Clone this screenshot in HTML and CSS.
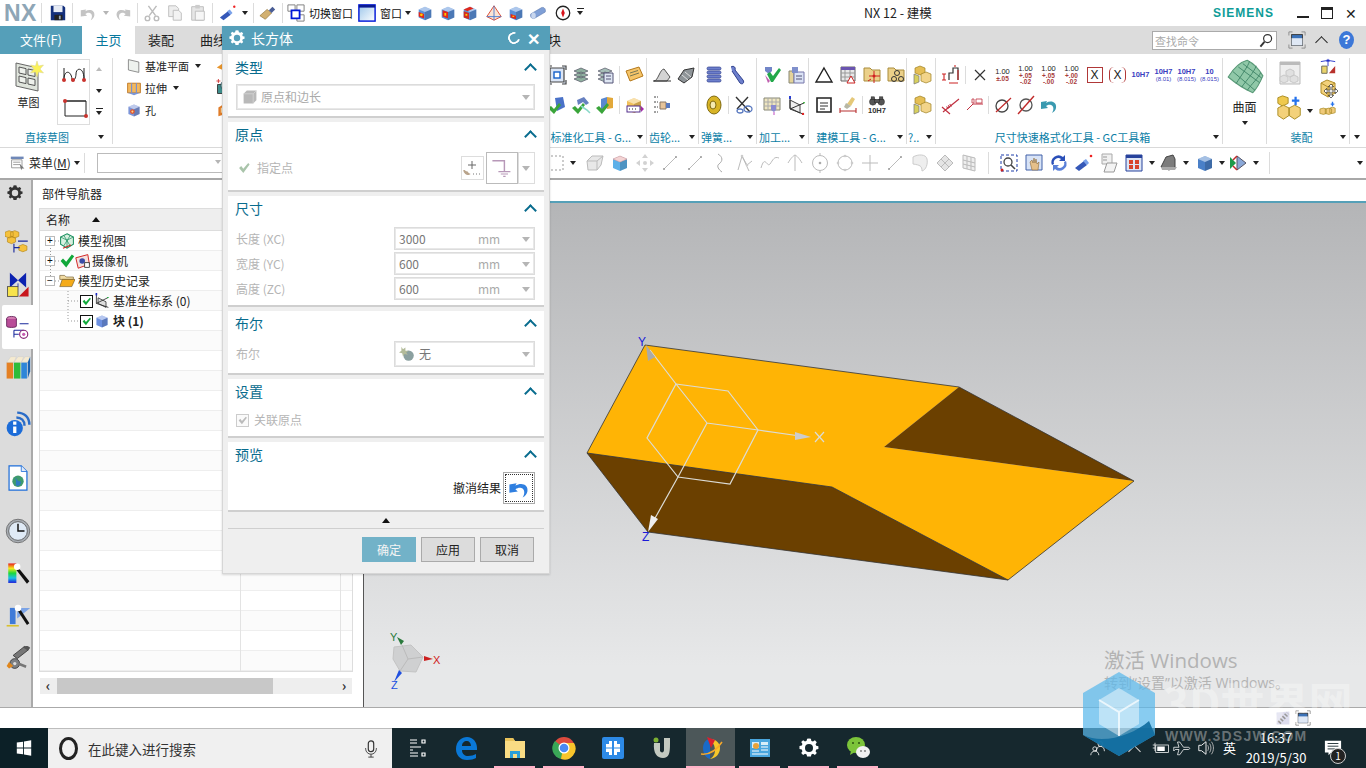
FILE: index.html
```html
<!DOCTYPE html>
<html lang="zh-CN">
<head>
<meta charset="utf-8">
<title>NX 12 - 建模</title>
<link rel="stylesheet" href="styles.css">
</head>
<body>
<svg class="defs" xmlns="http://www.w3.org/2000/svg">
<symbol id="save" viewBox="0 0 20 20"><path d="M2 2h14l2 2v14H2z" fill="#14307c"/><path d="M5 2h10v7H5z" fill="#e6ebf4"/><path d="M6 12h9v6H6z" fill="#222"/><path d="M11 13h2v4h-2z" fill="#9ab"/></symbol>
<symbol id="undo" viewBox="0 0 20 20"><path d="M2 7l6-1-1 2c5-3 11-1 10 5-.3 2-2 4-4 5 2-3 2-7-1-8-2-.5-3 0-5 1l2 2-7 1z" fill="currentColor"/></symbol>
<symbol id="redo" viewBox="0 0 20 20"><path d="M18 7l-6-1 1 2C8 5 2 7 3 13c.3 2 2 4 4 5-2-3-2-7 1-8 2-.5 3 0 5 1l-2 2 7 1z" fill="currentColor"/></symbol>
<symbol id="cut" viewBox="0 0 20 20"><g fill="none" stroke="#bcbcbc" stroke-width="1.6"><path d="M15 2L7 13M6 2l8 11"/><circle cx="5" cy="16" r="2.5"/><circle cx="15" cy="16" r="2.5"/></g></symbol>
<symbol id="copy" viewBox="0 0 20 20"><path d="M3 2h8l3 3v9H3z" fill="#eee" stroke="#bbb"/><path d="M8 7h6l3 3v8H8z" fill="#f3f3f3" stroke="#bbb"/></symbol>
<symbol id="paste" viewBox="0 0 20 20"><path d="M3 3h13v15H3z" fill="#e6e6e6" stroke="#bbb"/><path d="M7 1h5v4H7z" fill="#ccc"/><path d="M7 8h10v10H7z" fill="#f6f6f6" stroke="#bbb"/></symbol>
<symbol id="wand" viewBox="0 0 20 20"><path d="M1 15l9-7 3 4-8 6z" fill="#3558b8"/><path d="M9 8l3-2 3 4-2 2z" fill="#7aa2ea"/><path d="M17 2l1 1-1 1-1-1z" fill="#e00"/><circle cx="17" cy="3" r="1.3" fill="#e22"/></symbol>
<symbol id="brush" viewBox="0 0 20 20"><path d="M1 13l8-7 5 4-7 7z" fill="#d2b070" stroke="#8d7035" stroke-width=".7"/><path d="M11 7l4-4 3 3-4 4z" fill="#4a5d95"/></symbol>
<symbol id="switch" viewBox="0 0 20 20"><path d="M1 1h8v7H1zM11 1h8v7h-8zM11 12h8v7h-8z" fill="#fff" stroke="#777"/><path d="M5 7h9v9H5z" fill="#fff" stroke="#0018d8" stroke-width="2"/></symbol>
<symbol id="winb" viewBox="0 0 20 20"><rect x="1" y="1" width="18" height="18" fill="url(#gw)" stroke="#0018d8" stroke-width="1.6"/><path d="M1 1h18v3H1z" fill="#0a1a90"/></symbol>
<linearGradient id="gw" x1="0" y1="0" x2="1" y2="1"><stop offset="0" stop-color="#9cc6ea"/><stop offset="1" stop-color="#fff"/></linearGradient>
<symbol id="cube" viewBox="0 0 20 20"><path d="M3 6l7-3 7 3v9l-7 3-7-3z" fill="currentColor"/><path d="M3 6l7-3 7 3-7 3z" fill="#fff" opacity=".5"/><path d="M10 9l7-3v9l-7 3z" fill="#000" opacity=".16"/></symbol>
<symbol id="vc1" viewBox="0 0 20 20"><use href="#cube" color="#5a8fd8"/><path d="M3 9l6 2v5l-6-2z" fill="#e0281c"/><circle cx="6" cy="12" r="1.5" fill="#fc0"/></symbol>
<symbol id="vc2" viewBox="0 0 20 20"><use href="#cube" color="#5a8fd8"/><path d="M4 7l6 2v7l-6-2z" fill="#e0281c"/><rect x="6" y="10" width="2" height="3" fill="#fc0"/></symbol>
<symbol id="vc3" viewBox="0 0 20 20"><use href="#cube" color="#5a8fd8"/><path d="M3 6l7-3 4 2-7 3z" fill="#e0281c"/><path d="M3 8l6 2v7l-6-2z" fill="#d02c20"/><rect x="5" y="11" width="2" height="2" fill="#fc0"/></symbol>
<symbol id="vc4" viewBox="0 0 20 20"><path d="M10 2l8 12-8 4-8-4z" fill="#fbe3d3" stroke="#d8422a"/><path d="M10 2v16M2 14l16 0" stroke="#4a7ad0" fill="none"/></symbol>
<symbol id="vc5" viewBox="0 0 20 20"><use href="#cube" color="#5a8fd8"/><path d="M4 11l6 2v4l-6-2z" fill="#e0281c"/><rect x="6" y="13" width="2" height="1.4" fill="#fc0"/></symbol>
<symbol id="cyl" viewBox="0 0 20 20"><path d="M2 11l12-7c3-1 5 2 4 5L6 16c-3 1-5-2-4-5z" fill="#7f9fd6" stroke="#5672a8" stroke-width=".6"/><ellipse cx="5" cy="13" rx="2.5" ry="3.5" fill="#c8d6ee"/></symbol>
<symbol id="compass" viewBox="0 0 20 20"><circle cx="10" cy="10" r="7.5" fill="#fff" stroke="#222" stroke-width="1.4"/><path d="M10 5l2 5-2 5-2-5z" fill="#d8141c"/></symbol>
<symbol id="search" viewBox="0 0 20 20"><circle cx="12" cy="7" r="5" fill="#fff" stroke="#333" stroke-width="1.5"/><path d="M8 11l-5 6" stroke="#333" stroke-width="2.4"/></symbol>
<symbol id="frame" viewBox="0 0 20 20"><path d="M3 3h14v14H3zM1 1v4M3 1h2v0M15 1h4v4M1 15v4h4M15 19h4v-4" fill="#dbe5f5" stroke="#444" stroke-width="1.2"/><rect x="7" y="7" width="6" height="6" fill="#fff" stroke="#1560c8" stroke-width="1.4"/></symbol>
<symbol id="sk" viewBox="0 0 32 32"><path d="M3 3l22 5v23L3 26z" fill="#dfe4dc" stroke="#666"/><path d="M6 7l7 1.6v6l-7-1.6zM15 9l7 1.5v6l-7-1.5zM6 16l7 1.6v6l-7-1.6zM15 18l7 1.5v6l-7-1.5z" fill="#eef1ec" stroke="#555"/><path d="M24 1l1.5 5 5-1-3.5 4 3.500 4-5-1-1.500 5-1.500-5-5 1 3.500-4-3.500-4 5 1z" fill="#fbf25a" stroke="#d9d28a" stroke-width=".5"/></symbol>
<symbol id="scurve" viewBox="0 0 30 20"><path d="M5 2v11M25 2v11M5 13c0-9 7-9 8 0 0 5 4 0 4-5 0-7 8-7 8 5" fill="none" stroke="#222"/><circle cx="5" cy="14" r="2" fill="#c9332e"/><circle cx="14" cy="14" r="2" fill="#c9332e"/><circle cx="25" cy="14" r="2" fill="#c9332e"/></symbol>
<symbol id="srect" viewBox="0 0 30 20"><path d="M6 3v15h21V3z" fill="none" stroke="#222"/><path d="M6 3h21" stroke="#222"/><circle cx="6" cy="3" r="2" fill="#c9332e"/><circle cx="27" cy="18" r="2" fill="#c9332e"/></symbol>
<symbol id="plane" viewBox="0 0 20 20"><path d="M3 2l13 3v13L3 15z" fill="#eef2ee" stroke="#777"/></symbol>
<symbol id="extr" viewBox="0 0 20 20"><path d="M2 4h16v12H2z" fill="#f4b85c" stroke="#b86a10"/><path d="M7 4v12M13 4v12" stroke="#7790d0" stroke-width="1.4"/><path d="M2 16l8 3 8-3" fill="#7a96d8"/></symbol>
<symbol id="hole" viewBox="0 0 20 20"><use href="#cube" color="#7c94d8"/><circle cx="8" cy="12" r="3" fill="#e2552c"/><circle cx="8" cy="12" r="1.300" fill="#fbd18a"/></symbol>
<symbol id="ribo" viewBox="0 0 20 20"><path d="M1 13l9-6 9 4-9 6z" fill="#e8952c"/><path d="M7 6l3-3 3 3-3 3z" fill="#7a96d8"/></symbol>
<symbol id="unite" viewBox="0 0 20 20"><rect x="2" y="7" width="11" height="11" fill="#3e8e8c" stroke="#222"/><circle cx="12" cy="8" r="6" fill="#8fc0b8" stroke="#345"/><path d="M3 0v5M.5 2.500h5" stroke="#c22"/></symbol>
<symbol id="shell" viewBox="0 0 20 20"><path d="M3 8l10-6v14l-10 3z" fill="#e07c28"/><path d="M6 9l5-3v7l-5 2z" fill="#f4d3a0"/></symbol>
<symbol id="stack" viewBox="0 0 20 20"><g fill="#8fb09f" stroke="#556"  stroke-width=".7"><path d="M3 14l7-3 7 3-7 3zM3 10l7-3 7 3-7 3zM3 6l7-3 7 3-7 3z"/></g></symbol>
<symbol id="sdoc" viewBox="0 0 20 20"><g fill="#a7bfb8" stroke="#556" stroke-width=".7"><path d="M3 14l7-3 7 3-7 3zM3 10l7-3 7 3-7 3zM3 6l7-3 7 3-7 3z"/></g><path d="M9 8h9v10H9z" fill="#dfe7f3" stroke="#557"/><path d="M11 11h5M11 14h5" stroke="#557"/></symbol>
<symbol id="tag" viewBox="0 0 20 20"><path d="M2 6l13-4 4 9-13 5z" fill="#f5c468" stroke="#b5791b"/><path d="M6 8l8-2.500M6 11l9-3" stroke="#775" /></symbol>
<symbol id="btick" viewBox="0 0 20 20"><path d="M8 3l8-1 2 10-8 4z" fill="#4a72c8"/><path d="M1 13l3-2 3 3 5-6 2 2-7 9z" fill="#3aa53a"/></symbol>
<symbol id="htick" viewBox="0 0 20 20"><path d="M6 5l7-3 5 6-3 2-3-3-5 3z" fill="#6780c0"/><path d="M1 13l3-2 3 3 5-6 2 2-7 9z" fill="#3aa53a"/><path d="M10 11l6 4 3 3" stroke="#88d8c8" stroke-width="1.6" fill="none"/></symbol>
<symbol id="ytick" viewBox="0 0 20 20"><path d="M6 4l6-2v11l-6 2z" fill="#5a88d0"/><path d="M12 2l6 1v10l-6 1z" fill="#e2a83a"/><path d="M1 13l3-2 3 3 5-6 2 2-7 9z" fill="#3aa53a"/></symbol>
<symbol id="parts" viewBox="0 0 20 20"><use href="#cube" color="#f0c05a"/><rect x="3" y="11" width="13" height="6" fill="#fff" stroke="#532e8c"/><path d="M5 14h1M8 14h1M11 14h1" stroke="#222"/><path d="M17 11l3 3-3 3z" fill="#a02ca8"/></symbol>
<symbol id="ga" viewBox="0 0 20 20"><path d="M2 16c4 0 6-12 10-12l6 8-3 4z" fill="#d4d4d4" stroke="#555"/><path d="M1 16h18" stroke="#333"/></symbol>
<symbol id="gb" viewBox="0 0 20 20"><path d="M2 14l6-9 10-2-2 9-8 6z" fill="#8e9498" stroke="#333"/><path d="M6 10l6 5M9 7l6 5" stroke="#ddd"/></symbol>
<symbol id="gc" viewBox="0 0 20 20"><path d="M2 2h4M2 7h4M2 12h4M2 17h4" stroke="#444" stroke-dasharray="2 1" /><path d="M8 7h6v7H8z" fill="#e7c49a" stroke="#876"/><path d="M14 8h4v5h-4z" fill="#5a7ac0"/></symbol>
<symbol id="coil" viewBox="0 0 20 20"><g fill="#6d7fcc" stroke="#2e3f8d" stroke-width=".7"><rect x="3" y="2" width="14" height="3" rx="1.500"/><rect x="3" y="6" width="14" height="3" rx="1.500"/><rect x="3" y="10" width="14" height="3" rx="1.500"/><rect x="3" y="14" width="14" height="3" rx="1.500"/></g></symbol>
<symbol id="spr" viewBox="0 0 20 20"><path d="M3 2c3-2 5 1 4 3l8 10c2 3-1 5-3 3L4 6" fill="#6d7fcc" stroke="#2e3f8d"/></symbol>
<symbol id="roll" viewBox="0 0 20 20"><ellipse cx="10" cy="10" rx="7" ry="9" fill="#d8b426" stroke="#7f6a10"/><ellipse cx="9" cy="10" rx="3" ry="4" fill="#f5eab0" stroke="#7f6a10"/></symbol>
<symbol id="sci" viewBox="0 0 20 20"><path d="M3 2l14 15M15 2L4 14" stroke="#333" stroke-width="1.400"/><ellipse cx="15" cy="14" rx="4" ry="3" fill="none" stroke="#5a7ac0" stroke-width="1.300"/><ellipse cx="7" cy="16" rx="3" ry="2" fill="none" stroke="#5a7ac0" stroke-width="1.300"/></symbol>
<symbol id="vtick" viewBox="0 0 20 20"><path d="M3 2h7v4l-3 3-4-3z" fill="#7286c8"/><path d="M5 9l3-2 3 4 6-8 2 2-8 12-2 0z" fill="#22a84a"/><path d="M3 10l3 8 2-2" fill="#c060b0"/></symbol>
<symbol id="vdoc" viewBox="0 0 20 20"><path d="M3 6h5v12H3z" fill="#e4d39a" stroke="#887"/><path d="M8 7h10v11H8z" fill="#dbe3f5" stroke="#77a"/><path d="M6 2h6v6H6z" fill="#8090cc"/><path d="M10 11h6M10 14h6" stroke="#557"/></symbol>
<symbol id="gridp" viewBox="0 0 20 20"><path d="M2 3h16v12H2z" fill="#efe6c0" stroke="#887"/><path d="M2 7h16M2 11h16M6 3v12M10 3v12M14 3v12" stroke="#aaa"/><path d="M9 10h5v5l-2 2-3-2z" fill="#8a8ad0"/><path d="M12 17v3" stroke="#c04ac0"/></symbol>
<symbol id="axes" viewBox="0 0 20 20"><path d="M4 5l10 5v8L4 13z" fill="#eee" stroke="#444"/><path d="M4 2v12l14-6M4 14l13 5" fill="none" stroke="#333"/><path d="M3 1h2v3H3z" fill="#2a3fd0"/><path d="M17 7l2 0-1 2z" fill="#2a2"/><circle cx="17" cy="19" r="1.200" fill="#d22"/></symbol>
<symbol id="tri" viewBox="0 0 20 20"><path d="M10 3l8 14H2z" fill="#fff" stroke="#222" stroke-width="1.400"/></symbol>
<symbol id="tbl" viewBox="0 0 20 20"><path d="M3 2h14v14H3z" fill="#e8e8e8" stroke="#666"/><path d="M3 2h14v3H3z" fill="#6a54b0"/><path d="M3 8h14M3 12h14M7 5v11M12 5v11" stroke="#999"/><path d="M13 11l4 7H9z" fill="#fff" stroke="#c22"/></symbol>
<symbol id="frd" viewBox="0 0 20 20"><path d="M2 3h6l2 2h8v11H2z" fill="#ebd089" stroke="#a98c3c"/><path d="M12 6v12M7 11h11M6 16l3-2" stroke="#d02020"/><circle cx="12" cy="11" r="1.500" fill="#d02020"/></symbol>
<symbol id="fcc" viewBox="0 0 20 20"><path d="M2 3h6l2 2h8v11H2z" fill="#ebd089" stroke="#a98c3c"/><circle cx="11" cy="8" r="2.500" fill="none" stroke="#333"/><circle cx="8" cy="14" r="2.500" fill="none" stroke="#333"/><circle cx="15" cy="14" r="2.500" fill="none" stroke="#333"/></symbol>
<symbol id="dlin" viewBox="0 0 20 20"><path d="M3 3h14v14H3z" fill="#fff" stroke="#222" stroke-width="1.600"/><path d="M6 8h8M6 11h8M6 14h5" stroke="#333"/></symbol>
<symbol id="bdim" viewBox="0 0 20 20"><path d="M9 9l5-7 3 2-4 7z" fill="#e5c879"/><path d="M8 8l5 3-4 3-3-2z" fill="#b7b7a5"/><path d="M2 13v5M18 13v5M2 16h16" stroke="#b83030" stroke-width="1.100"/></symbol>
<symbol id="binoc" viewBox="0 0 20 12"><g fill="#555" stroke="#222" stroke-width=".6"><circle cx="5" cy="7" r="4"/><circle cx="15" cy="7" r="4"/><rect x="7" y="4" width="6" height="4"/><rect x="3" y="1" width="4" height="3"/><rect x="13" y="1" width="4" height="3"/></g></symbol>
<symbol id="ybx" viewBox="0 0 20 20"><path d="M8 1l5 2v5l-5 2-5-2V3z" fill="#e5be55" stroke="#9d8122" stroke-width=".7"/><path d="M2 9l5 2v6l-5 2z" fill="#d8d05f" stroke="#777" stroke-width=".7"/><path d="M9 9l5-2 5 2v7l-5 2-5-2z" fill="#f2d48a" stroke="#9d8122" stroke-width=".7"/></symbol>
<symbol id="dstep" viewBox="0 0 20 20"><path d="M8 15V8h4V3h5v12" fill="none" stroke="#333" stroke-width="1.200"/><path d="M1 15h4M3 9v6M1 9h4M14 0v2M8 18h9" stroke="#c22" stroke-width="1.100"/><path d="M17 5v10" stroke="#c22"/></symbol>
<symbol id="xb" viewBox="0 0 20 20"><path d="M5 5l10 10M15 5L5 15" stroke="#333" stroke-width="1.200"/></symbol>
<symbol id="rd1" viewBox="0 0 20 20"><path d="M2 17L18 4M1 12l8 7" stroke="#c03040" stroke-width="1.200"/><path d="M6 13l4-3" stroke="#c03040" stroke-width="3" stroke-dasharray="1 1"/></symbol>
<symbol id="rd2" viewBox="0 0 20 20"><path d="M2 15l6-6h10" stroke="#c03040" fill="none"/><path d="M7 4h2v4H7zM11 4h6v4h-6z" fill="none" stroke="#c03040" stroke-width=".8"/></symbol>
<symbol id="dia1" viewBox="0 0 20 20"><circle cx="9" cy="11" r="6" fill="none" stroke="#444" stroke-width="1.300"/><path d="M3 17L18 3" stroke="#c02a2a" stroke-width="1.200"/></symbol>
<symbol id="dia2" viewBox="0 0 20 20"><circle cx="10" cy="10" r="6" fill="none" stroke="#555" stroke-width="1.300"/><path d="M2 19L18 1" stroke="#c02a2a" stroke-width="1.400"/></symbol>
<symbol id="surf" viewBox="0 0 34 34"><path d="M2 17C8 7 15 3 19 2c4 2 10 7 14 14-3 7-6 12-9 15-7-3-15-8-22-14z" fill="#90c8a8" stroke="#5a9a78"/><path d="M6 12l20 17M11 8l19 14M15 5l17 13M9 23C14 15 20 7 21 3M14 26c5-7 11-13 13-19M19 29c4-6 10-11 12-16" fill="none" stroke="#3d8265" stroke-width=".8"/></symbol>
<symbol id="aspl" viewBox="0 0 28 26"><path d="M4 1h20v22H4z" fill="#eee" stroke="#bbb"/><path d="M4 1h20v3H4z" fill="#bbb"/><path d="M14 8l4 2v4l-4 2-4-2v-4zM8 14l4 2v4l-4 2-4-2v-4zM18 14l4 2v4l-4 2-4-2v-4z" fill="#e0e0e0" stroke="#c8c8c8"/></symbol>
<symbol id="asy1" viewBox="0 0 20 20"><path d="M10 1v8M2 4l6-1M18 4l-6-1M10 5v0" stroke="#2030c8"/><path d="M3 9h6v8H3z" fill="#ead36b" stroke="#665"/><path d="M11 17l7-8v8z" fill="#b8312c"/><path d="M8 2h4v2H8z" fill="#2030c8"/></symbol>
<symbol id="asy2" viewBox="0 0 20 20"><path d="M3 5l6-3 8 3v10l-7 4-7-4z" fill="#f3d17a" stroke="#b08d28"/><path d="M3 5l7 4 7-4M10 9v10" fill="none" stroke="#b08d28"/></symbol>
<symbol id="cross" viewBox="0 0 16 16"><path d="M8 0l3 3H9v4h4V5l3 3-3 3V9H9v4h2l-3 3-3-3h2V9H3v2L0 8l3-3v2h4V3H5z" fill="#fff" stroke="#111" stroke-width=".7"/></symbol>
<symbol id="asy3" viewBox="0 0 28 30"><path d="M6 2l6 2v6l-6 3-5-3V4z" fill="#efc94e" stroke="#a98c24"/><path d="M1 15l6-3 6 3v8l-6 4-6-4zM13 15l6-3 6 3v8l-6 4-6-4z" fill="#f3d17a" stroke="#a98c24"/><path d="M20 3v9M16 7h8" stroke="#2472ec" stroke-width="2.400"/></symbol>
<symbol id="asy4" viewBox="0 0 20 20"><g fill="#f0ca7a" stroke="#a98c24" stroke-width=".8"><path d="M1 10l4-1 3 1v5l-3 1-4-1zM7 10l4-1 3 1v5l-3 1-4-1zM12 9l3-1 3 1v5l-3 1-3-1z"/></g><path d="M15 2v5M13 4.500h4" stroke="#2472ec" stroke-width="1.500"/></symbol>
<symbol id="menu" viewBox="0 0 20 20"><path d="M1 2h16v3H1z" fill="#6f88b8"/><path d="M2 6h13v10H2z" fill="#fff" stroke="#888"/><path d="M4 9h9M4 12h9" stroke="#888"/><path d="M12 11l6 6-3 0-1 2z" fill="#777"/></symbol>
<symbol id="gear" viewBox="0 0 20 20"><path d="M10 1l2 .3.5 2.300 1.700.7 2-1.300 2 2-1.300 2 .7 1.700 2.300.5v3l-2.300.5-.7 1.700 1.300 2-2 2-2-1.300-1.700.7-.5 2.300H8l-.5-2.300-1.700-.7-2 1.300-2-2 1.300-2-.7-1.700L0 12v-3l2.400-.5.7-1.700-1.300-2 2-2 2 1.300 1.700-.7L8 1.300z" transform="translate(.5 -.5) scale(.95)" fill="currentColor"/><circle cx="10" cy="10" r="4" fill="var(--hole, #fff)"/></symbol>
<symbol id="hier" viewBox="0 0 32 32"><path d="M5 2l5 2v5l-5 2-5-2V4zM12 2l5 2v5l-5 2-5-2V4zM8 9l5 2v5l-5 2-5-2v-5zM22 19l5 2v5l-5 2-5-2v-5z" fill="#f5c13c" stroke="#b4861a" stroke-width=".8"/><path d="M11 18v11M11 23h7M16 15h12" stroke="#1a2a9c" stroke-width="1.400" fill="none"/></symbol>
<symbol id="bowtie" viewBox="0 0 32 32"><path d="M6 1l10 9 10-9v18L16 10 6 19z" fill="#0c22b0"/><rect x="3" y="18" width="13" height="12" fill="#f7e34c" stroke="#444"/><path d="M17 30l12-12v12z" fill="#c8161c"/><path d="M16 14v4" stroke="#0c22b0"/></symbol>
<symbol id="rolet" viewBox="0 0 32 32"><ellipse cx="8" cy="6" rx="6" ry="3" fill="#d27ab0" stroke="#5c1a52"/><path d="M2 6v9c0 2 12 2 12 0V6" fill="#b84d98" stroke="#5c1a52"/><path d="M11 20h12M11 20v9M11 25h6M18 12h11" stroke="#1a2a9c" stroke-width="1.300" fill="none"/><circle cx="23" cy="25" r="5" fill="none" stroke="#8c2a7c" stroke-width="1.400"/><circle cx="23" cy="25" r="2" fill="#c65ab0"/></symbol>
<symbol id="books" viewBox="0 0 32 32"><path d="M2 9h8v20H2z" fill="#e48024"/><path d="M11 9h8v20h-8z" fill="#2ebc3a"/><path d="M20 9h7v20h-7z" fill="#2e86d8"/><path d="M2 9l5-7h7l-3 7zM11 9l5-7h7l-3 7zM20 9l5-7h6l-3 7z" fill="#f5ead0" stroke="#ccc" stroke-width=".5"/><path d="M28 9l3-7v18l-3 9z" fill="#1a62b0"/></symbol>
<symbol id="info" viewBox="0 0 32 32"><circle cx="12" cy="21" r="10" fill="#1c6cd8"/><path d="M10 19h4v8h-4zM10 13h4v4h-4z" fill="#fff"/><path d="M14 8c6 0 10 4 10 10M15 2c9 0 15 6 15 15" fill="none" stroke="#2a6cc8" stroke-width="3"/></symbol>
<symbol id="wdoc" viewBox="0 0 32 32"><path d="M5 1h15l7 7v23H5z" fill="#fff" stroke="#1c6cd8" stroke-width="1.500"/><path d="M20 1v7h7" fill="#dfe9f8" stroke="#1c6cd8"/><circle cx="16" cy="20" r="7" fill="#3e9a6e"/><path d="M12 15c3 2 3 5 7 5 2 2-1 6-4 6-4-3 1-5-3-11z" fill="#2f7ac0"/></symbol>
<symbol id="clock" viewBox="0 0 32 32"><circle cx="16" cy="16" r="14.500" fill="#a9aeb4" stroke="#666"/><circle cx="16" cy="16" r="11.500" fill="#dfeaf6" stroke="#555"/><path d="M16 7v9h8" fill="none" stroke="#111" stroke-width="1.800"/></symbol>
<symbol id="spectr" viewBox="0 0 32 32"><linearGradient id="gs" x1="0" y1="0" x2="0" y2="1"><stop offset="0" stop-color="#e81c1c"/><stop offset=".25" stop-color="#f6e81c"/><stop offset=".5" stop-color="#1cd83a"/><stop offset=".75" stop-color="#1cc0e8"/><stop offset="1" stop-color="#1c1cd8"/></linearGradient><rect x="4" y="3" width="10" height="24" fill="url(#gs)"/><path d="M14 11l3-2 13 16-3 3z" fill="#111"/><circle cx="15" cy="7" r="4" fill="#fff"/></symbol>
<symbol id="sim" viewBox="0 0 32 32"><path d="M6 6h7v20H6z" fill="#3f7ad8"/><path d="M15 6h16L15 19z" fill="#7ca4e6"/><path d="M16 10l3-2 11 17-3 2z" fill="#111"/><circle cx="16" cy="6" r="4" fill="#fff"/><path d="M2 28h15" stroke="#d8c030" stroke-width="2"/></symbol>
<symbol id="tools" viewBox="0 0 32 32"><path d="M10 14L24 3l5 4-14 11z" fill="#777" stroke="#333"/><path d="M22 4c3-2 7-2 9 1l-3 3z" fill="#555"/><circle cx="12" cy="24" r="6" fill="#7c7f83" stroke="#333"/><circle cx="12" cy="24" r="2" fill="#ddd"/><path d="M5 22l5 5-5 3-3-3z" fill="#e0861c"/><path d="M16 24l10 4" stroke="#777" stroke-width="3"/></symbol>
<symbol id="tgreen" viewBox="0 0 20 20"><path d="M10 1l8 4v9l-8 5-8-5V5z" fill="#d8f0e0" stroke="#1c9060" stroke-width="1.300"/><path d="M2 5l8 4 8-4M10 9v10M6 3l8 13M14 3L6 16" fill="none" stroke="#1c9060" stroke-width=".9"/><path d="M5 19l10-4" stroke="#d02020" stroke-width="1.300"/></symbol>
<symbol id="tcam" viewBox="0 0 20 20"><path d="M1 6l15-4 2 12-14 5z" fill="#f5e0dc" stroke="#d02020" stroke-width="1.200"/><circle cx="9" cy="10" r="3.500" fill="#3b4ca8"/><path d="M12 12h6v6h-6z" fill="#fff" stroke="#222"/></symbol>
<symbol id="tick" viewBox="0 0 20 20"><path d="M2 10l3-3 4 4 7-9 3 2-10 14z" fill="#11a83a"/></symbol>
<symbol id="folder" viewBox="0 0 20 20"><path d="M1 3h6l2 2h9v3H1z" fill="#f2dca5" stroke="#6f5a2a" stroke-width=".8"/><path d="M1 17l3-9h16l-4 9z" fill="#f4ab1a" stroke="#6f5a2a" stroke-width=".8"/></symbol>
<symbol id="tcsys" viewBox="0 0 20 20"><path d="M5 6l10 5v7L5 13z" fill="#ddd" stroke="#333"/><path d="M3 1v12l15 5M3 13l14-7" fill="none" stroke="#222"/><path d="M2 0h2v3H2z" fill="#1c2cc8"/><path d="M16 5l3 0-2 2z" fill="#1ba238"/></symbol>
<symbol id="ticksm" viewBox="0 0 20 20"><path d="M3 10l3-3 3 4 7-8 2 2-9 12z" fill="currentColor"/></symbol>
<symbol id="pt" viewBox="0 0 20 20"><path d="M10 3v8M6 7h8" stroke="#666"/><path d="M2 12c0 3 3 5 5 4l-2-1 1-1" fill="#b9a48c" stroke="#b9a48c" stroke-width="1.500"/><path d="M11 16h1M14 16h1M17 16h1" stroke="#777"/></symbol>
<symbol id="ptg" viewBox="0 0 20 20"><path d="M2 4h10v9" fill="none" stroke="#b798b8" stroke-width="1.200"/><path d="M7 13h10M9 15h6M11 17h2" stroke="#b798b8"/></symbol>
<symbol id="bomb" viewBox="0 0 20 20"><circle cx="12" cy="12" r="6.500" fill="#8ba0a0"/><path d="M3 1l2 3 3-2 0 4 4 0-3 2 2 3-4-1-2 3-1-4-4-1 3-2z" fill="#b3bb9a"/></symbol>
<symbol id="cubeg" viewBox="0 0 20 20"><path d="M2 6l4-4h12v12l-4 4H2z" fill="#b9b9b9"/><path d="M2 6h12v12" fill="none" stroke="#d6d6d6"/><path d="M14 6l4-4" stroke="#d6d6d6"/></symbol>
<symbol id="dsel" viewBox="0 0 20 20"><path d="M2 3h16v14H2z" fill="none" stroke="#999" stroke-dasharray="2 2"/></symbol>
<symbol id="gbox" viewBox="0 0 20 20"><path d="M2 8l5-5h11l-2 9-4 5H3z" fill="#e8e8e8" stroke="#bbb"/><path d="M2 8h10v9M12 8l6-5" fill="none" stroke="#bbb"/></symbol>
<symbol id="gcube" viewBox="0 0 20 20"><use href="#cube" color="#5db0e8"/><path d="M3 6l7-3 7 3-7 3z" fill="#f3d4d4" stroke="#d89090" stroke-width=".5"/></symbol>
<symbol id="g4a" viewBox="0 0 20 20"><path d="M10 1l3 4h-6zM10 19l3-4h-6zM1 10l4 3V7zM19 10l-4 3V7z" fill="#d2d2d2"/><circle cx="10" cy="10" r="2" fill="#d2d2d2"/></symbol>
<symbol id="gl" viewBox="0 0 20 20"><path d="M4 16L16 4" stroke="#bbb"/><circle cx="16" cy="4" r="1" fill="#999"/><circle cx="4" cy="16" r="1" fill="#999"/></symbol>
<symbol id="gs2" viewBox="0 0 20 20"><path d="M8 1c5 3 5 7 1 10-3 2 0 6 3 8" fill="none" stroke="#aaa"/></symbol>
<symbol id="gpl" viewBox="0 0 20 20"><path d="M3 17L7 3l5 9 5-4M7 3l7 15" fill="none" stroke="#bbb"/><circle cx="7" cy="3" r="1.300" fill="#ccc"/><circle cx="12" cy="12" r="1.300" fill="#ccc"/></symbol>
<symbol id="gw2" viewBox="0 0 20 20"><path d="M1 15c4-14 6 0 9-4s4-8 9-6" fill="none" stroke="#bbb"/></symbol>
<symbol id="gup" viewBox="0 0 20 20"><path d="M10 2v16M3 10c3-5 5-7 7-8 2 1 4 3 7 8" fill="none" stroke="#bbb"/></symbol>
<symbol id="gcd" viewBox="0 0 20 20"><circle cx="10" cy="10" r="7.500" fill="none" stroke="#bbb"/><circle cx="10" cy="10" r="1.300" fill="#aaa"/><path d="M10 0v3M10 17v3" stroke="#bbb"/></symbol>
<symbol id="gc2" viewBox="0 0 20 20"><circle cx="10" cy="10" r="7" fill="none" stroke="#bbb"/><circle cx="10" cy="3" r="1.300" fill="#ccc"/><circle cx="10" cy="17" r="1.300" fill="#ccc"/><circle cx="3" cy="10" r="1.300" fill="#ccc"/><circle cx="17" cy="10" r="1.300" fill="#ccc"/></symbol>
<symbol id="gp" viewBox="0 0 20 20"><path d="M10 2v16M2 10h16" stroke="#bbb"/></symbol>
<symbol id="gblob" viewBox="0 0 20 20"><path d="M3 4c5-3 13-3 14 2s-1 11-5 12c0-5-2-6-9-7z" fill="#eee" stroke="#ccc"/></symbol>
<symbol id="gdia" viewBox="0 0 20 20"><path d="M10 2l8 8-8 8-8-8z" fill="#e4e4e4" stroke="#bbb"/><path d="M6 6l8 8M10 2l-4 4M14 6l-8 8" stroke="#bbb"/></symbol>
<symbol id="ggrid" viewBox="0 0 20 20"><path d="M4 2l12 3v13L4 15z" fill="#eee" stroke="#bbb"/><path d="M8 3v13M12 4v13M4 7l12 3M4 11l12 3" stroke="#bbb"/></symbol>
<symbol id="zfit" viewBox="0 0 20 20"><path d="M2 2h16v16H2z" fill="#fff" stroke="#1c3ca8" stroke-dasharray="3 2"/><circle cx="9" cy="9" r="4" fill="none" stroke="#444" stroke-width="1.300"/><path d="M12 12l4 4" stroke="#444" stroke-width="1.600"/><circle cx="3" cy="17" r="1.500" fill="#c22"/></symbol>
<symbol id="hand" viewBox="0 0 20 20"><path d="M2 2h16v15H2z" fill="#d8e3f6" stroke="#4060a8"/><path d="M6 9l2-2 1 3 1-5 1 5 1-4 1 5 2-2-1 8H8z" fill="#e5c08a" stroke="#8a6a3a" stroke-width=".6"/></symbol>
<symbol id="rot" viewBox="0 0 20 20"><path d="M3 12A7 7 0 0 1 14 4l2-2v6h-6l2-2a4.500 4.500 0 0 0-7 5z" fill="#2a4fb8"/><path d="M17 8a7 7 0 0 1-11 8l-2 2v-6h6l-2 2a4.500 4.500 0 0 0 7-5z" fill="#5a80d8"/></symbol>
<symbol id="dcopy" viewBox="0 0 20 20"><path d="M3 1h10v10H3z" fill="#f0f0f0" stroke="#aaa"/><path d="M4 4h4M4 7h4" stroke="#999"/><path d="M8 10h10l-3 9H5z" fill="#f3f3f3" stroke="#999"/></symbol>
<symbol id="gwin" viewBox="0 0 20 20"><path d="M2 2h16v16H2z" fill="#dde5f5" stroke="#27429c"/><path d="M2 2h16v3H2z" fill="#27429c"/><path d="M5 7h4v4H5zM11 7h4v4h-4zM5 12h4v4H5zM11 12h4v4h-4z" fill="#d8442c"/></symbol>
<symbol id="gshade" viewBox="0 0 20 20"><path d="M2 14l5-10 7-2 2 4v8l-6 3z" fill="#7c7c7c" stroke="#444"/><path d="M2 14h16l-2 3H3z" fill="#aaa"/></symbol>
<symbol id="ccube" viewBox="0 0 20 20"><use href="#cube" color="#4a80c8"/></symbol>
<symbol id="cdia" viewBox="0 0 20 20"><path d="M8 3l9 7-9 7z" fill="#8aa8d8" stroke="#556"/><path d="M1 4l6 6-6 6z" fill="#1c9a4a"/><path d="M8 3l-4 4M8 17l-4-4" stroke="#c02a2a" stroke-width="1.500"/></symbol>
<symbol id="checker" viewBox="0 0 20 20"><path d="M2 3l16-1v16H2z" fill="#dde"/><path d="M5 16L16 4" stroke="#999" stroke-width="5" stroke-dasharray="2 2"/></symbol>
<symbol id="fit2" viewBox="0 0 20 20"><path d="M1 5V1h4M15 1h4v4M19 15v4h-4M5 19H1v-4" fill="none" stroke="#888"/><rect x="4" y="4" width="12" height="12" fill="#3b72b8" stroke="#333"/><rect x="4" y="8" width="12" height="8" fill="#dfe8f5"/></symbol>
<symbol id="win" viewBox="0 0 20 20"><path d="M2 4l7-1v6.500H2zM10 2.800L18 1.500v8h-8zM2 10.500h7V17l-7-1zM10 10.500h8v8l-8-1.200z" fill="#fff"/></symbol>
<symbol id="mic" viewBox="0 0 20 20"><rect x="7" y="1" width="6" height="12" rx="3" fill="none" stroke="#333" stroke-width="1.300"/><path d="M4 9c0 9 12 9 12 0M10 16v3M7 19h6" fill="none" stroke="#333"/></symbol>
<symbol id="tview" viewBox="0 0 20 20"><path d="M3 2h7M3 5h7M15 2h3v3h-3zM3 9h11M3 15h8M3 18h8M15 15h3v3h-3zM3 12h3" fill="none" stroke="#fff" stroke-width="1.200"/></symbol>
<symbol id="edge" viewBox="0 0 24 24"><path d="M2 13C2 5 8 1 13 1c6 0 10 5 10 11v2H8c0 4 3 6 6 6 3 0 6-1 8-2v4c-2 1-5 2-9 2C6 24 2 19 2 13zM8 10h9c0-3-2-5-4-5-3 0-5 2-5 5z" fill="#0a78d7"/></symbol>
<symbol id="expl" viewBox="0 0 24 24"><path d="M2 2h8l2 3h10v17H2z" fill="#f9dc84"/><path d="M2 2h8l2 3H2z" fill="#e9c35a"/><path d="M7 15h10v7h-3v-4h-4v4H7z" fill="#2a9fd8"/></symbol>
<symbol id="chrome" viewBox="0 0 24 24"><circle cx="12" cy="12" r="11" fill="#dd4b3e"/><path d="M12 12L3 5a11 11 0 0 0 6 18z" fill="#3aa757"/><path d="M12 7h10a11 11 0 0 1-13 16z" fill="#f8c52b"/><circle cx="12" cy="12" r="5.500" fill="#fff"/><circle cx="12" cy="12" r="4.300" fill="#4a8af4"/></symbol>
<symbol id="bluapp" viewBox="0 0 24 24"><rect x="1" y="1" width="22" height="22" rx="2" fill="#2d8ae6"/><path d="M8 5h3v14H8zM13 5h3v14h-3zM5 8h3v8H5zM16 8h3v8h-3z" fill="#fff"/><path d="M2 12h20" stroke="#2d8ae6"/></symbol>
<symbol id="japp" viewBox="0 0 24 24"><path d="M4 7c-1 10 3 15 9 15s7-5 7-14v-6h-6v12c0 3-3 3-4 1V7z" fill="#c3c9c0"/><circle cx="6" cy="4" r="2.500" fill="#7cb032"/></symbol>
<symbol id="nxapp" viewBox="0 0 24 24"><path d="M4 12C4 6 8 3 11 3v20C7 22 4 18 4 12z" fill="#1a6ac8"/><path d="M11 3c6 0 10 4 10 9 0 6-4 10-10 11 5-3 6-8 4-14z" fill="#f6c62a"/><path d="M8 1l8 3-4 8z" fill="#d82030"/><path d="M2 18c8 1 15-3 21-12" fill="none" stroke="#f6a82a" stroke-width="1.500"/></symbol>
<symbol id="cbapp" viewBox="0 0 24 24"><rect x="2" y="3" width="20" height="18" fill="#4aa6de"/><path d="M4 6h7v6H4zM13 6h7v3h-7z" fill="#d8eef8"/><circle cx="8" cy="10" r="3" fill="#e8a23a"/><path d="M13 11h7M13 14h7M4 15h7M4 18h16" stroke="#fff"/></symbol>
<symbol id="wechat" viewBox="0 0 24 24"><ellipse cx="10" cy="9" rx="9" ry="8" fill="#7cc43a"/><path d="M5 15l-1 4 5-3z" fill="#7cc43a"/><ellipse cx="17" cy="16" rx="7" ry="6" fill="#f2f2f2"/><circle cx="7" cy="7" r="1" fill="#2c5410"/><circle cx="13" cy="7" r="1" fill="#2c5410"/><circle cx="15" cy="15" r=".9" fill="#777"/><circle cx="19" cy="15" r=".9" fill="#777"/></symbol>
<symbol id="people" viewBox="0 0 20 20"><circle cx="13" cy="5" r="3" fill="none" stroke="#fff"/><path d="M8 14c0-4 2-6 5-6s5 2 5 6" fill="none" stroke="#fff"/><circle cx="6" cy="11" r="2.500" fill="none" stroke="#fff"/><path d="M1 19c0-3 2-5 5-5s5 2 5 5" fill="none" stroke="#fff"/></symbol>
<symbol id="batt" viewBox="0 0 24 20"><rect x="5" y="6" width="17" height="10" fill="none" stroke="#fff"/><rect x="7" y="8" width="10" height="6" fill="#fff"/><path d="M1 6h3M1 10h3M4 3v11" stroke="#fff"/></symbol>
<symbol id="plane2" viewBox="0 0 24 20"><path d="M1 9h7L6 2h3l5 7h6c3 0 3 3 0 3h-6l-5 7H6l2-7H3l-2 2z" fill="none" stroke="#fff"/></symbol>
<symbol id="vol" viewBox="0 0 20 20"><path d="M2 7h3l5-4v14l-5-4H2z" fill="none" stroke="#fff"/><path d="M12 7c1 2 1 4 0 6M14 5c2 3 2 7 0 10M16 3c3 4 3 10 0 14" fill="none" stroke="#bbb"/></symbol>
<symbol id="notif" viewBox="0 0 20 20"><path d="M1 2h18v13H8l-3 3v-3H1z" fill="#fff"/><path d="M4 5h12M4 8h12M4 11h8" stroke="#1a2a30"/></symbol>
</svg>

<div class="app">
  <header class="titlebar">
    <span class="nx-logo">NX</span><i class="sep"></i>
    <svg class="qa ml5"><use href="#save"/></svg><i class="sep ml3"></i>
    <svg class="qa ml4 grey"><use href="#undo"/></svg><span class="dd dd-light ml1"></span>
    <svg class="qa grey"><use href="#redo"/></svg><i class="sep ml3"></i>
    <svg class="qa ml3"><use href="#cut"/></svg>
    <svg class="qa ml1"><use href="#copy"/></svg>
    <svg class="qa ml1"><use href="#paste"/></svg><i class="sep ml3"></i>
    <svg class="qa ml4"><use href="#wand"/></svg><span class="dd"></span><i class="sep ml2"></i>
    <svg class="qa ml3"><use href="#brush"/></svg><i class="sep ml3"></i>
    <svg class="qa ml2"><use href="#switch"/></svg><span class="qt ml2 w44">切换窗口</span>
    <svg class="qa ml3"><use href="#winb"/></svg><span class="qt ml2 w22">窗口</span><span class="dd"></span>
    <svg class="qa"><use href="#vc1"/></svg>
    <svg class="qa ml1"><use href="#vc2"/></svg>
    <svg class="qa"><use href="#vc3"/></svg>
    <svg class="qa ml2"><use href="#vc4"/></svg>
    <svg class="qa"><use href="#vc5"/></svg>
    <svg class="qa"><use href="#cyl"/></svg>
    <svg class="qa ml3"><use href="#compass"/></svg><span class="dd dd-bar"></span>
    <span class="win-title">NX 12 - 建模</span>
    <span class="siemens">SIEMENS</span>
    <div class="winctl"><span class="w-min"></span><span class="w-res"></span><span class="w-x">✕</span></div>
  </header>

  <nav class="tabs">
    <span class="tab tab-file">文件(F)</span>
    <span class="tab tab-on">主页</span>
    <span class="tab t-asm">装配</span>
    <span class="tab t-cur">曲线</span>
    <span class="tab t-blk">块</span>
    <div class="cmd-find"><span>查找命令</span><svg class="s16"><use href="#search"/></svg></div>
    <div class="tab-tools">
      <svg class="s18"><use href="#fit2"/></svg>
      <span class="chev-b"></span>
      <span class="help">?</span>
    </div>
  </nav>

  <section class="ribbon">
    <div class="grp g-sketch">
      <div class="sk-body">
        <div class="sk-big"><svg class="s32"><use href="#sk"/></svg><span>草图</span></div>
        <div class="gallery"><svg class="gal"><use href="#scurve"/></svg><svg class="gal"><use href="#srect"/></svg></div>
        <div class="scroller"><span class="dd dd-up"></span><span class="dd"></span><span class="dd dd-bar"></span></div>
      </div>
      <div class="glabel"><span>直接草图</span><i class="dd"></i></div>
    </div>
    <div class="grp g-feat">
      <div class="feat-col">
        <div class="feat-row"><svg class="s16"><use href="#plane"/></svg><span>基准平面</span><i class="dd"></i></div>
        <div class="feat-row"><svg class="s16"><use href="#extr"/></svg><span>拉伸</span><i class="dd"></i></div>
        <div class="feat-row"><svg class="s16"><use href="#hole"/></svg><span>孔</span></div>
      </div>
      <div class="feat-col2">
        <svg class="s16"><use href="#ribo"/></svg>
        <svg class="s16"><use href="#unite"/></svg>
        <svg class="s16"><use href="#shell"/></svg>
      </div>
    </div>
    <div class="grp g-std">
      <div class="gbody">
        <div class="irow"><b class="ic"><svg><use href="#frame"/></svg></b><b class="ic"><svg><use href="#stack"/></svg></b><b class="ic"><svg><use href="#sdoc"/></svg></b><i class="vs"></i><b class="ic"><svg><use href="#tag"/></svg></b></div>
        <div class="irow"><b class="ic"><svg><use href="#btick"/></svg></b><b class="ic"><svg><use href="#htick"/></svg></b><b class="ic"><svg><use href="#ytick"/></svg></b><i class="vs"></i><b class="ic"><svg><use href="#parts"/></svg></b></div>
      </div>
      <div class="glabel"><span>标准化工具 - G...</span><i class="dd"></i></div>
    </div>
    <div class="grp g-gear">
      <div class="gbody">
        <div class="irow"><b class="ic"><svg><use href="#ga"/></svg></b><b class="ic"><svg><use href="#gb"/></svg></b></div>
        <div class="irow"><b class="ic"><svg><use href="#gc"/></svg></b></div>
      </div>
      <div class="glabel"><span>齿轮...</span><i class="dd"></i></div>
    </div>
    <div class="grp g-spr">
      <div class="gbody">
        <div class="irow"><b class="ic"><svg><use href="#coil"/></svg></b><b class="ic"><svg><use href="#spr"/></svg></b></div>
        <div class="irow"><b class="ic"><svg><use href="#roll"/></svg></b><i class="vs"></i><b class="ic"><svg><use href="#sci"/></svg></b></div>
      </div>
      <div class="glabel"><span>弹簧...</span><i class="dd"></i></div>
    </div>
    <div class="grp g-mach">
      <div class="gbody">
        <div class="irow"><b class="ic"><svg><use href="#vtick"/></svg></b><b class="ic"><svg><use href="#vdoc"/></svg></b></div>
        <div class="irow"><b class="ic"><svg><use href="#gridp"/></svg></b><b class="ic"><svg><use href="#axes"/></svg></b></div>
      </div>
      <div class="glabel"><span>加工...</span><i class="dd"></i></div>
    </div>
    <div class="grp g-mod">
      <div class="gbody">
        <div class="irow"><b class="ic"><svg><use href="#tri"/></svg></b><b class="ic"><svg><use href="#tbl"/></svg></b><b class="ic"><svg><use href="#frd"/></svg></b><b class="ic"><svg><use href="#fcc"/></svg></b></div>
        <div class="irow"><b class="ic"><svg><use href="#dlin"/></svg></b><b class="ic"><svg><use href="#bdim"/></svg></b><i class="vs"></i><b class="ic binoc"><svg><use href="#binoc"/></svg><em>10H7</em></b></div>
      </div>
      <div class="glabel"><span>建模工具 - G...</span><i class="dd"></i></div>
    </div>
    <div class="grp g-q">
      <div class="gbody">
        <div class="irow"><b class="ic"><svg><use href="#ybx"/></svg></b></div>
        <div class="irow"><b class="ic"><svg><use href="#ybx"/></svg></b></div>
      </div>
      <div class="glabel"><span>?..</span><i class="dd"></i></div>
    </div>
    <div class="grp g-dim">
      <div class="gbody">
        <div class="irow"><b class="ic"><svg><use href="#dstep"/></svg></b><i class="vs"></i>
          <b class="ic w23"><svg><use href="#xb"/></svg></b>
          <b class="ic w23 dm"><u>1.00</u><s class="red">±.05</s></b>
          <b class="ic w23 dm"><u>1.00</u><s class="red two">+.05<br>-.02</s></b>
          <b class="ic w23 dm"><u>1.00</u><s class="red two">+.05<br>-.00</s></b>
          <b class="ic w23 dm"><u>1.00</u><s class="red two">+.00<br>-.02</s></b>
          <b class="ic w23"><span class="xbox">X</span></b>
          <b class="ic w23"><span class="xpar">X</span></b>
          <b class="ic w23 hh"><u>10H7</u></b>
          <b class="ic w23 hh"><u>10H7</u><s>(8.01)</s></b>
          <b class="ic w23 hh"><u>10H7</u><s>(8.015)</s></b>
          <b class="ic w23 hh"><u>10</u><s>(8.015)</s></b>
        </div>
        <div class="irow"><b class="ic"><svg><use href="#rd1"/></svg></b>
          <b class="ic w23"><svg><use href="#rd2"/></svg></b><i class="vs"></i>
          <b class="ic w23"><svg><use href="#dia1"/></svg></b>
          <b class="ic w23"><svg><use href="#dia2"/></svg></b>
          <b class="ic w23 teal"><svg><use href="#undo"/></svg></b>
        </div>
      </div>
      <div class="glabel"><span>尺寸快速格式化工具 - GC工具箱</span><i class="dd"></i></div>
    </div>
    <div class="grp g-surf">
      <div class="surf-body"><svg class="s34"><use href="#surf"/></svg><span>曲面</span><i class="dd"></i></div>
      <div class="glabel glabel-empty"></div>
    </div>
    <div class="grp g-asm">
      <div class="asm-body">
        <div class="asm-l"><svg class="s28"><use href="#aspl"/></svg><div class="asm-add"><svg class="s28"><use href="#asy3"/></svg><i class="dd"></i></div></div>
        <div class="asm-r">
          <svg class="s18"><use href="#asy1"/></svg>
          <div class="asm-mv"><svg class="s20"><use href="#asy2"/></svg><svg class="cursor"><use href="#cross"/></svg></div>
          <svg class="s18"><use href="#asy4"/></svg>
        </div>
      </div>
      <div class="glabel"><span>装配</span><i class="dd"></i></div>
    </div>
    <div class="rib-end"><i class="dd"></i></div>
  </section>

  <section class="sel-bar">
    <svg class="s16 m-ic"><use href="#menu"/></svg>
    <span class="m-txt">菜单(<u>M</u>)</span><i class="dd"></i><i class="sep sb-sep"></i>
    <div class="combo"><i class="dd dd-light"></i></div>
    <b class="ic"><svg><use href="#dsel"/></svg></b><i class="dd"></i>
    <b class="ic w25 ml3"><svg><use href="#gbox"/></svg></b>
    <b class="ic w25"><svg><use href="#gcube"/></svg></b>
    <b class="ic w25"><svg><use href="#g4a"/></svg></b>
    <b class="ic w25"><svg><use href="#gl"/></svg></b>
    <b class="ic w25"><svg><use href="#gl"/></svg></b>
    <b class="ic w25"><svg><use href="#gs2"/></svg></b>
    <b class="ic w25"><svg><use href="#gpl"/></svg></b>
    <b class="ic w25"><svg><use href="#gw2"/></svg></b>
    <b class="ic w25"><svg><use href="#gup"/></svg></b>
    <b class="ic w25"><svg><use href="#gcd"/></svg></b>
    <b class="ic w25"><svg><use href="#gc2"/></svg></b>
    <b class="ic w25"><svg><use href="#gp"/></svg></b>
    <b class="ic w25"><svg><use href="#gl"/></svg></b>
    <b class="ic w25"><svg><use href="#gblob"/></svg></b>
    <b class="ic w25"><svg><use href="#gdia"/></svg></b>
    <b class="ic w24"><svg><use href="#ggrid"/></svg></b>
    <i class="sep sb-tall"></i>
    <b class="ic w25"><svg><use href="#zfit"/></svg></b>
    <b class="ic w25"><svg><use href="#hand"/></svg></b>
    <b class="ic w25"><svg><use href="#rot"/></svg></b>
    <b class="ic w25"><svg><use href="#wand"/></svg></b>
    <b class="ic w25"><svg><use href="#dcopy"/></svg></b>
    <b class="ic w25"><svg><use href="#gwin"/></svg></b><i class="dd"></i>
    <b class="ic w22"><svg><use href="#gshade"/></svg></b><i class="dd"></i>
    <b class="ic w22 ml2"><svg><use href="#ccube"/></svg></b><i class="dd"></i>
    <b class="ic w22"><svg><use href="#cdia"/></svg></b><i class="dd"></i>
    <i class="sep sb-tall"></i>
    <i class="dd sb-end"></i>
  </section>

  <main class="main">
    <aside class="rail">
      <svg class="rl-g"><use href="#gear"/></svg>
      <svg class="rl mt25"><use href="#hier"/></svg>
      <svg class="rl mt11"><use href="#bowtie"/></svg>
      <div class="rl-on"><svg class="rl"><use href="#rolet"/></svg></div>
      <svg class="rl mt3"><use href="#books"/></svg>
      <svg class="rl mt24"><use href="#info"/></svg>
      <svg class="rl mt22"><use href="#wdoc"/></svg>
      <svg class="rl mt21"><use href="#clock"/></svg>
      <svg class="rl mt11"><use href="#spectr"/></svg>
      <svg class="rl mt10"><use href="#sim"/></svg>
      <svg class="rl mt9"><use href="#tools"/></svg>
    </aside>
    <section class="nav">
      <h2 class="nav-title">部件导航器</h2>
      <div class="tbl">
        <div class="thead"><span>名称</span><i class="sort"></i></div>
        <div class="tbody">
          <svg class="tree-lines"><path d="M10.500 14v40M10.500 54v0M15 10h6M15 30h6M15 50h6M28 60v30h13M28 70h13" fill="none" stroke="#999" stroke-dasharray="1 2"/></svg>
          <div class="trow"><span class="exp">+</span><svg class="ti ml3"><use href="#tgreen"/></svg><span class="tt ml3">模型视图</span></div>
          <div class="trow"><span class="exp">+</span><svg class="ti ml3"><use href="#tick"/></svg><svg class="ti ml0"><use href="#tcam"/></svg><span class="tt ml1">摄像机</span></div>
          <div class="trow"><span class="exp">−</span><svg class="ti ml3"><use href="#folder"/></svg><span class="tt ml3">模型历史记录</span></div>
          <div class="trow t2"><span class="chk"><svg><use href="#ticksm"/></svg></span><svg class="ti ml1"><use href="#tcsys"/></svg><span class="tt ml3">基准坐标系 (0)</span></div>
          <div class="trow t2"><span class="chk"><svg><use href="#ticksm"/></svg></span><svg class="ti cb ml1"><use href="#cube"/></svg><span class="tt ml3 bold">块 (1)</span></div>
        </div>
      </div>
      <div class="hscroll"><span class="arr">‹</span><span class="track"><i></i></span><span class="arr">›</span></div>
    </section>
    <section class="work">
      <div class="strip"></div>
      <div class="viewport">
        <svg class="scene" viewBox="364 203 1002 504">
          <path d="M645 345L959 387 884 447 1134 481 1008 580 832 487 587 453z" fill="#ffb405"/>
          <path d="M587 453L832 487 1008 580 648 532zM959 387L1134 481 884 447z" fill="#6b4000"/>
          <path d="M645 345L959 387M587 453L645 345M587 453L648 532 1008 580 1134 481 959 387M587 453L832 487 1008 580" fill="none" stroke="#333" stroke-width=".8"/>
          <g fill="none" stroke="#dcdcd6" stroke-width="1.200">
            <path d="M676 384L728 391 758 430 730 484 678 477 647 438z"/>
            <path d="M707 423L676 384M707 423L758 430M707 423L678 477"/>
            <path d="M676 384L650 350M758 430L800 436M678 477L654 520"/>
            <path d="M815 432l9 10M824 432l-9 10"/>
          </g>
          <path d="M646 345l9 12-7 4z" fill="#aaa"/><path d="M811 437l-16-5 0 8z" fill="#ccc"/><path d="M648 532l3-17 7 4z" fill="#eee"/>
          <text class="ax-b" x="638" y="346">Y</text><text class="ax-b" x="642" y="541">Z</text>
          <g transform="translate(408 659)">
            <path d="M-14-12L3-14 15-2 8 13-8 12-15 0z" fill="#cfd0d1" stroke="#c4c4c4"/>
            <path d="M0 0L-6-14M0 0L15-2M0 0L-8 12" stroke="#bbb"/>
            <path d="M-7-14l-4-8 7 4z" fill="#2a7a3c"/><path d="M16-3l9 3-9 2z" fill="#cc2020"/><path d="M-9 11l-5 12 8-9z" fill="#2050e0"/>
            <text class="tr g" x="-18" y="-18">Y</text><text class="tr r" x="25" y="5">X</text><text class="tr b" x="-17" y="30">Z</text>
          </g>
        </svg>
      </div>
    </section>
  </main>

  <footer class="status">
    <svg class="s16"><use href="#checker"/></svg>
    <svg class="s16"><use href="#fit2"/></svg>
  </footer>

  <footer class="taskbar">
    <div class="start"><svg class="s18"><use href="#win"/></svg></div>
    <div class="tsearch"><i class="cortana"></i><span>在此键入进行搜索</span><svg class="s18"><use href="#mic"/></svg></div>
    <div class="tb tb-tv"><svg class="s20"><use href="#tview"/></svg></div>
    <div class="tb"><svg class="s24"><use href="#edge"/></svg></div>
    <div class="tb run"><svg class="s24"><use href="#expl"/></svg></div>
    <div class="tb run"><svg class="s24"><use href="#chrome"/></svg></div>
    <div class="tb"><svg class="s24"><use href="#bluapp"/></svg></div>
    <div class="tb"><svg class="s24"><use href="#japp"/></svg></div>
    <div class="tb run on"><svg class="s24"><use href="#nxapp"/></svg></div>
    <div class="tb run"><svg class="s24"><use href="#cbapp"/></svg></div>
    <div class="tb run tgear"><svg class="s20"><use href="#gear"/></svg></div>
    <div class="tb run"><svg class="s24"><use href="#wechat"/></svg></div>
    <div class="tray">
      <svg class="s16"><use href="#people"/></svg>
      <span class="caret"></span>
      <svg class="s18 t-batt"><use href="#batt"/></svg>
      <svg class="s18 t-plane"><use href="#plane2"/></svg>
      <svg class="s18 t-vol"><use href="#vol"/></svg>
      <span class="ime">英</span>
      <div class="clock"><span>16:37</span><span>2019/5/30</span></div>
      <div class="notif"><svg class="s18"><use href="#notif"/></svg><span class="nbadge">1</span></div>
    </div>
  </footer>

  <aside class="dialog">
    <div class="dlg-head">
      <svg class="s16 dg"><use href="#gear"/></svg><span class="dlg-title">长方体</span>
      <span class="reset"></span><span class="dlg-x">✕</span>
    </div>
    <div class="dlg-body">
      <section class="sec s-type">
        <div class="sec-h"><span>类型</span><i class="chev"></i></div>
        <div class="field wide"><svg class="s16"><use href="#cubeg"/></svg><span>原点和边长</span><i class="da"></i></div>
      </section>
      <section class="sec s-org">
        <div class="sec-h"><span>原点</span><i class="chev"></i></div>
        <div class="org-row">
          <svg class="s14 gtick"><use href="#ticksm"/></svg><span class="dis">指定点</span>
          <span class="pbtn"><svg class="s20"><use href="#pt"/></svg></span>
          <span class="pbig"><svg class="s24"><use href="#ptg"/></svg></span>
          <span class="pdd"><i class="da"></i></span>
        </div>
      </section>
      <section class="sec s-dim">
        <div class="sec-h"><span>尺寸</span><i class="chev"></i></div>
        <div class="drow"><span class="dis lbl">长度 (XC)</span><div class="field num"><span class="v">3000</span><span class="mm">mm</span><i class="da"></i></div></div>
        <div class="drow"><span class="dis lbl">宽度 (YC)</span><div class="field num"><span class="v">600</span><span class="mm">mm</span><i class="da"></i></div></div>
        <div class="drow"><span class="dis lbl">高度 (ZC)</span><div class="field num"><span class="v">600</span><span class="mm">mm</span><i class="da"></i></div></div>
      </section>
      <section class="sec s-bool">
        <div class="sec-h"><span>布尔</span><i class="chev"></i></div>
        <div class="drow"><span class="dis lbl">布尔</span><div class="field num tall"><svg class="s16"><use href="#bomb"/></svg><span class="v2">无</span><i class="da"></i></div></div>
      </section>
      <section class="sec s-set">
        <div class="sec-h"><span>设置</span><i class="chev"></i></div>
        <div class="chk-row"><span class="gchk"><svg><use href="#ticksm"/></svg></span><span class="dis">关联原点</span></div>
      </section>
      <section class="sec s-prev">
        <div class="sec-h"><span>预览</span><i class="chev"></i></div>
        <div class="prev-row"><span>撤消结果</span><span class="undo-btn"><svg class="s24"><use href="#undo"/></svg></span></div>
      </section>
    </div>
    <div class="more"><i></i></div>
    <div class="dlg-btns"><span class="btn ok">确定</span><span class="btn">应用</span><span class="btn">取消</span></div>
  </aside>

  <div class="activate"><span class="a1">激活 Windows</span><span class="a2">转到“设置”以激活 Windows。</span></div>
  <div class="wm">
    <svg class="wm-hex" viewBox="0 0 72 84"><path d="M36 0l36 21v42L36 84 0 63V21z" fill="#5ab9ec" opacity=".72"/><path d="M36 16l20 12v24L36 64 16 52V28z" fill="#fff" opacity=".45"/><path d="M16 28l20 12 20-12M36 40v24" stroke="#fff" stroke-width="2" fill="none" opacity=".7"/><path d="M0 63c20 10 50 0 66-14l6 14-36 21z" fill="#0e6c9e" opacity=".9"/></svg>
    <span class="wm-t">3D世界网</span>
    <span class="wm-u">WWW.3DSJW.COM</span>
  </div>
</div>
</body>
</html>
```

FILE: styles.css
```css
*{box-sizing:border-box}
html,body{margin:0;padding:0;width:1366px;height:768px;overflow:hidden}
body{font:12px/16px "Noto Sans CJK SC","Noto Sans",sans-serif;color:#222;background:#fff}
.defs{position:absolute;width:0;height:0}
svg{display:block;flex:none}
.app{position:relative;width:1366px;height:768px;display:flex;flex-direction:column;overflow:hidden}
i,b,em,u,s{font-style:normal;font-weight:normal;text-decoration:none}

.ml0{margin-left:0}.ml1{margin-left:1px}.ml2{margin-left:2px}.ml3{margin-left:3px}.ml4{margin-left:4px}.ml5{margin-left:5px}
.s14{width:14px;height:14px}.s16{width:16px;height:16px}.s18{width:18px;height:18px}.s20{width:20px;height:20px}.s24{width:24px;height:24px}.s28{width:28px;height:28px}.s32{width:32px;height:32px}.s34{width:38px;height:38px}

.dd{display:block;flex:none;width:12px;height:4px;position:relative}
.dd::after{content:"";position:absolute;left:3px;top:0;border:3.500px solid transparent;border-top:4px solid #222;border-bottom:0}
.dd-light::after{border-top-color:#b5b5b5}
.dd-up::after{border-top:0;border-bottom:4px solid #bbb}
.dd-bar::before{content:"";position:absolute;left:3px;top:-3px;width:7px;height:1px;background:#222}

.titlebar{height:26px;flex:none;display:flex;align-items:center;background:#fff}
.nx-logo{width:41px;padding-left:4px;font:bold 23px/26px "Liberation Sans",sans-serif;color:#8ea6b6;letter-spacing:.3px}
.sep{display:block;flex:none;width:1px;height:20px;background:#dcdcdc}
.qa{width:22px;height:18px;flex:none}
.grey{color:#c4c4c4}
.qt{font-size:11px;line-height:16px;white-space:nowrap;color:#111}
.w44{width:44px}.w22{width:22px}
.win-title{margin-left:278px;width:74px;white-space:nowrap;font-size:12.500px;color:#222}
.siemens{margin-left:auto;font:bold 12px/16px "Liberation Sans",sans-serif;letter-spacing:1px;color:#0e9c98}
.winctl{width:92px;display:flex;justify-content:flex-end;align-items:center;gap:12px;padding-right:7px}
.w-min{width:12px;height:2px;background:#222;margin-top:8px}
.w-res{width:12px;height:12px;border:1px solid #222;background:linear-gradient(#222,#222) 0 0/100% 2px no-repeat}
.w-x{font-size:14px;line-height:16px;width:14px;color:#222}

.tabs{height:28px;flex:none;display:flex;align-items:stretch;background:#dcdcdc;font-size:13px}
.tab{display:flex;align-items:center;justify-content:center;white-space:nowrap}
.tab-file{width:82px;background:#559fb9;color:#fff}
.tab-on{width:53px;background:#fff;color:#08789e;margin-top:-1px;padding-top:1px}
.t-asm{margin-left:13px;width:26px}
.t-cur{margin-left:26px;width:26px}
.t-blk{margin-left:322px;width:13px}
.cmd-find{margin:5px 0 4px 591px;width:125px;display:flex;align-items:center;justify-content:space-between;background:#fff;border:1px solid #aaa;padding:0 2px;font-size:11px;color:#aaa}
.tab-tools{display:flex;align-items:center;margin-left:11px;gap:8px}
.chev-b{width:9px;height:9px;border:solid #222;border-width:1.500px 0 0 1.500px;transform:rotate(45deg);margin:4px 3px 0 3px}
.help{width:15px;height:18px;border-radius:50%;background:#3c78d8;color:#fff;font:bold 13px/18px "Liberation Sans",sans-serif;text-align:center;margin-left:2px}

.ribbon{height:94px;flex:none;display:flex;background:#fff;border-bottom:1px solid #d9d9d9}
.grp{flex:none;display:flex;flex-direction:column;height:86px;margin-top:4px;border-right:1px solid #dcdcdc}
.gbody{height:72px;padding-top:6px;display:flex;flex-direction:column;gap:8px;padding-left:3px}
.irow{display:flex;height:22px;align-items:center}
.glabel{display:flex;align-items:center;height:14px;font-size:11px;line-height:14px;color:#0a7ea6;white-space:nowrap;overflow:hidden}
.glabel span{flex:1;text-align:center;overflow:hidden}
.glabel .dd{margin-left:1px}
.ic{flex:none;width:24px;height:22px;display:flex;align-items:center;justify-content:center;flex-direction:column}
.ic svg{width:20px;height:20px}
.w23{width:23px}.w24{width:24px}.w25{width:25px}.w22{width:22px}
.vs{flex:none;width:5px;height:18px;background:linear-gradient(#dcdcdc,#dcdcdc) center/1px 100% no-repeat}
.g-sketch{width:113px}
.sk-body{height:72px;display:flex}
.sk-big{width:57px;display:flex;flex-direction:column;align-items:center;padding-top:2px}
.sk-big span{margin-top:3px;font-size:11px;line-height:14px}
.gallery{width:33px;height:66px;margin-top:1px;border:1px solid #ddd;display:flex;flex-direction:column;align-items:center;justify-content:space-around}
.gal{width:30px;height:20px}
.scroller{width:18px;margin-left:3px;padding-top:9px;display:flex;flex-direction:column;gap:18px}
.g-sketch .glabel span{flex:none;width:94px;text-align:center}
.g-feat{width:432px;flex-direction:row;border-right:0;padding:0 0 0 13px}
.feat-col{display:flex;flex-direction:column;margin-top:-3px;width:90px;height:66px}
.feat-row{display:flex;align-items:center;height:22px;font-size:11px;gap:3px}
.feat-col2{display:flex;flex-direction:column;gap:6px;margin-top:-1px}
.g-std{width:102px}
.g-std .gbody{padding-left:0}
.g-gear{width:52px}.g-spr{width:58px}.g-mach{width:52px}.g-mod{width:98px}.g-q{width:29px}.g-dim{width:287px}.g-surf{width:44px}.g-asm{width:83px}
.g-q .glabel span{text-align:left;padding-left:1px}
.g-gear .glabel span,.g-spr .glabel span,.g-mach .glabel span{text-align:left;padding-left:2px}
.g-std .glabel span{text-align:right;padding-right:2px}
.binoc svg{height:10px;width:18px}
.binoc em{font:bold 7.500px/9px "Liberation Sans",sans-serif;color:#333}
.dm u,.hh u{display:block;font:7.500px/8px "Liberation Sans",sans-serif;color:#222;text-align:center;white-space:nowrap}
.dm s{display:block;font:bold 6.500px/6px "Liberation Sans",sans-serif;text-align:center}
.red{color:#a83c3c}
.hh u{color:#3a3ec0;font-weight:bold}
.hh s{display:block;font:6px/7px "Liberation Sans",sans-serif;color:#3a3ec0;white-space:nowrap}
.xbox{width:16px;height:16px;border:1px solid #b03838;font:12px/14px "Liberation Sans",sans-serif;text-align:center;color:#222}
.xpar{width:17px;height:16px;border:solid #b03838;border-width:0 1px;border-radius:5px;font:12px/16px "Liberation Sans",sans-serif;text-align:center;color:#222}
.teal{color:#3a9ab0}
.surf-body{height:72px;display:flex;flex-direction:column;align-items:center}
.surf-body span{margin-top:4px;line-height:14px;font-size:12px}
.surf-body .dd{margin-top:7px}
.glabel-empty{height:14px}
.asm-body{height:72px;display:flex;padding-left:9px}
.asm-l{width:34px;display:flex;flex-direction:column;gap:6px;padding-top:2px}
.asm-add{position:relative;display:flex;align-items:center}
.asm-add .dd{position:absolute;left:28px;top:15px}
.asm-r{display:flex;flex-direction:column;align-items:center;margin-left:8px;width:20px;gap:2px}
.asm-mv{position:relative}
.cursor{position:absolute;left:6px;top:6px;width:14px;height:14px}
.rib-end{width:16px;padding:81px 0 0 1px}

.sel-bar{height:32px;flex:none;display:flex;align-items:center;background:#fff;border-bottom:2px solid #a8a8a8}
.m-ic{margin-left:10px}
.m-txt{margin-left:3px;width:45px;font-size:12px;white-space:nowrap}
.m-txt u{text-decoration:underline}
.sb-sep{margin-left:1px;height:20px}
.combo{margin:0 320px 0 12px;width:126px;height:20px;border:1px solid #bbb;flex:none}
.sel-bar .combo .dd{margin:6px 0 0 114px}
.sel-bar>.ic{height:24px}
.sb-tall{height:22px;margin:0 7px}
.sb-end{margin-left:77px}

.main{flex:1;min-height:0;display:flex}
.rail{width:33px;flex:none;background:#dcdcdc;border-right:2px solid #aaa;display:flex;flex-direction:column;align-items:flex-start;padding-left:2px}
.rl-g{width:16px;height:16px;margin:5px 0 0 5px;color:#333;--hole:#dcdcdc}
.rl{width:26px;height:32px;margin-left:3px}
.mt3{margin-top:3px}.mt9{margin-top:9px}.mt10{margin-top:10px}.mt11{margin-top:11px}.mt21{margin-top:21px}.mt22{margin-top:22px}.mt24{margin-top:24px}.mt25{margin-top:25px}
.rl-on{width:31px;height:44px;background:#fff;margin-top:4px;padding-top:6px;position:relative;z-index:1;border-radius:2px 0 0 2px}
.nav{width:331px;flex:none;background:#fff;border-right:1px solid #555;display:flex;flex-direction:column;padding:0 10px 0 6px}
.nav-title{margin:0;height:28px;padding:6px 0 0 3px;font-size:12px;line-height:16px;font-weight:normal;color:#222}
.tbl{border:1px solid #ddd;height:464px;flex:none}
.thead{height:22px;background:#eee;display:flex;align-items:center;padding-left:6px;border-bottom:1px solid #ddd;gap:14px}
.sort{border:4px solid transparent;border-bottom:5px solid #111;border-top:0;width:0;height:0;margin-left:8px}
.tbody{position:relative;height:440px;background:linear-gradient(#e3e3e3,#e3e3e3) 200px 0/1px 100% no-repeat,linear-gradient(#e3e3e3,#e3e3e3) 300px 0/1px 100% no-repeat,repeating-linear-gradient(#fff 0 19px,#eee 19px 20px,#fbfbfb 20px 39px,#eee 39px 40px)}
.tree-lines{position:absolute;left:0;top:0;width:60px;height:100px}
.trow{position:relative;display:flex;align-items:center;height:20px;padding-left:5px}
.t2{padding-left:40px}
.exp{width:10px;height:10px;border:1px solid #bbb;background:#fff;font:10px/8px "Liberation Sans",sans-serif;text-align:center;color:#111;margin-right:1px}
.ti{width:16px;height:16px}
.cb{color:#6c8fe0}
.tt{white-space:nowrap;color:#222;font-size:12px}
.bold{font-weight:bold}
.chk{width:13px;height:13px;border:1.500px solid #111;background:#fff;color:#11a83a}
.chk svg{width:11px;height:11px}
.hscroll{display:flex;margin:6px 0 0 1px;height:16px;background:#eee;width:312px;font-size:14px;line-height:15px}
.arr{width:16px;text-align:center;color:#333;font-weight:bold}
.track{flex:1}
.track i{display:block;margin-left:1px;width:216px;height:16px;background:#c8c8c8}

.work{flex:1;min-width:0;display:flex;flex-direction:column}
.strip{height:23px;flex:none;background:#fff;border-bottom:2px solid #55a0b8}
.viewport{flex:1;background:linear-gradient(#b4b5b7,#e7e8e9 92%);position:relative}
.scene{position:absolute;left:0;top:0;width:1002px;height:504px}
.ax-b{font:12px "Liberation Sans",sans-serif;fill:#1a1ad8}
.tr{font:11px "Liberation Sans",sans-serif}
.tr.g{fill:#2a7a3c}.tr.r{fill:#d02020}.tr.b{fill:#2050e0}

.status{height:21px;flex:none;background:#fff;border-top:1px solid #aaa;display:flex;justify-content:flex-end;align-items:center;padding-right:55px;gap:4px}
.taskbar{height:40px;flex:none;background:#16282e;display:flex;align-items:stretch;color:#fff}
.start{width:48px;background:#0c2027;display:flex;align-items:center;justify-content:center}
.tsearch{width:344px;background:#f0f0f0;color:#333;border-top:1px solid #bdbdbd;display:flex;align-items:center;font-size:13.500px;padding-left:11px}
.tsearch span{margin-left:10px;width:274px}
.cortana{width:19px;height:23px;border-radius:50%;border:3px solid #222}
.tb{width:49px;flex:none;display:flex;align-items:center;justify-content:center;position:relative}
.run::after{content:"";position:absolute;left:4px;right:4px;bottom:0;height:2px;background:#ffb2c8}
.on{background:#4c5759}
.on::after{left:0;right:0}
.tgear{color:#fff;--hole:#16282e}
.tray{flex:1;display:flex;align-items:center;padding-left:208px;position:relative}
.caret{width:9px;height:9px;border:solid #ddd;border-width:1px 0 0 1px;transform:rotate(45deg);margin:7px 0 0 24px}
.t-batt{margin-left:13px}
.t-plane{margin-left:3px}
.t-vol{margin-left:6px}
.ime{font-size:13px;margin-left:8px}
.clock{display:flex;flex-direction:column;align-items:center;width:64px;font-size:13px;line-height:20px;margin-left:8px;color:#fff}
.notif{position:relative;margin-left:16px}
.nbadge{position:absolute;left:6px;top:9px;width:16px;height:16px;border-radius:50%;background:#222;border:1px solid #ccc;font-size:10px;line-height:14px;text-align:center}

.dialog{position:absolute;left:222px;top:26px;width:328px;height:548px;background:#efefef;border:1px solid #d6d6d6;border-top:0;display:flex;flex-direction:column;box-shadow:0 1px 2px rgba(0,0,0,.15)}
.dlg-head{height:24px;flex:none;background:#559fb9;margin:0 -1px;display:flex;align-items:center;color:#fff;padding-left:7px}
.dg{color:#fff;--hole:#559fb9}
.dlg-title{margin-left:6px;font-size:14px;line-height:20px;width:250px}
.reset{width:12px;height:12px;border:2px solid #fff;border-right-color:transparent;border-radius:50%;margin-left:7px;transform:rotate(-30deg)}
.dlg-x{margin-left:7px;font-size:16px;line-height:18px;font-weight:bold;width:14px}
.dlg-body{flex:none;padding:4px 5px 0;display:flex;flex-direction:column;gap:4px}
.sec{background:#fff;border-bottom:2px solid #cfcfcf;padding:0 9px 0 8px}
.s-type{height:64px}.s-org{height:70px}.s-dim{height:111px}.s-bool{height:64px}.s-set{height:59px}.s-prev{height:70px}
.sec-h{display:flex;justify-content:space-between;align-items:center;font-size:14px;line-height:18px;color:#086c8e;height:24px;margin-left:-1px}
.s-type .sec-h{height:26px}
.chev{width:9px;height:9px;border:solid #086c8e;border-width:2px 0 0 2px;transform:rotate(45deg);margin:5px 0 0 0}
.field{border:1px solid #dcdcdc;outline:1px solid #e8e8e8;outline-offset:-2px;display:flex;align-items:center;position:relative;background:#fff;color:#aaa}
.wide{height:26px;margin-top:4px;padding-left:5px;font-size:12px;gap:3px}
.da{position:absolute;right:4px;top:50%;margin-top:-2px;border:4.500px solid transparent;border-top:5px solid #b5b5b5;border-bottom:0}
.org-row{display:flex;align-items:center;height:32px;margin-top:6px;position:relative}
.gtick{color:#a9c4aa;margin-left:1px}
.dis{color:#b5b5b5;font-size:12px;white-space:nowrap}
.org-row .dis{margin-left:6px;width:205px}
.pbtn{width:24px;height:24px;border:1px solid #ddd;display:flex;align-items:center;justify-content:center}
.pbig{width:32px;height:32px;border:1px solid #bbb;margin-left:2px;display:flex;align-items:center;justify-content:center}
.pdd{width:17px;height:32px;border:1px solid #ddd;position:relative}
.drow{display:flex;justify-content:space-between;align-items:center;height:25px}
.lbl{line-height:16px}
.num{width:141px;height:23px;padding-left:4px;font-size:12px}
.tall{height:26px;padding-left:4px}
.s-dim .sec-h + .drow{margin-top:6px}
.s-bool .drow{margin-top:6px;height:26px}
.v{width:79px;color:#777}.v2{color:#777;margin-left:4px}
.mm{color:#aaa}
.chk-row{display:flex;align-items:center;height:18px;margin-top:8px;gap:5px}
.gchk{width:13px;height:13px;border:1px solid #ccc;color:#bbb;background:#fafafa}
.gchk svg{width:11px;height:11px}
.prev-row{display:flex;justify-content:flex-end;align-items:center;margin-top:6px;gap:2px;color:#222}
.undo-btn{width:32px;height:32px;border:1px solid #aaa;outline:1px dotted #333;outline-offset:-3px;display:flex;align-items:center;justify-content:center;color:#2f7fe0}
.more{height:17px;flex:none;margin:0 5px;border-bottom:1px solid #cfcfcf;display:flex;justify-content:center;padding-top:6px}
.more i{border:4.500px solid transparent;border-bottom:5px solid #111;border-top:0;height:0;width:0}
.dlg-btns{display:flex;margin-top:8px;justify-content:flex-end;gap:5px;padding-right:15px}
.btn{width:54px;height:25px;background:#dcdcdc;border:1px solid #aaa;display:flex;align-items:center;justify-content:center;font-size:12px}
.btn.ok{background:#72b2c8;border-color:#72b2c8;color:#f4f4f4}

.activate{position:absolute;left:1104px;top:647px;display:flex;flex-direction:column;color:#b3b3b3;pointer-events:none}
.a1{font:20.500px/26px "Open Sans","Noto Sans CJK SC",sans-serif;white-space:nowrap}
.a2{font:14px/20px "Open Sans","Noto Sans CJK SC",sans-serif;white-space:nowrap}
.wm{position:absolute;left:1083px;top:672px;width:270px;height:84px;pointer-events:none}
.wm-hex{position:absolute;left:0;top:0;width:72px;height:84px}
.wm-t{position:absolute;left:80px;top:4px;font:bold 44px/50px "Noto Sans CJK SC",sans-serif;color:rgba(255,255,255,.32);white-space:nowrap}
.wm-u{position:absolute;left:82px;top:55px;font:bold 14px/18px "Liberation Sans",sans-serif;letter-spacing:1.200px;color:rgba(205,205,205,.45);white-space:nowrap}
```
